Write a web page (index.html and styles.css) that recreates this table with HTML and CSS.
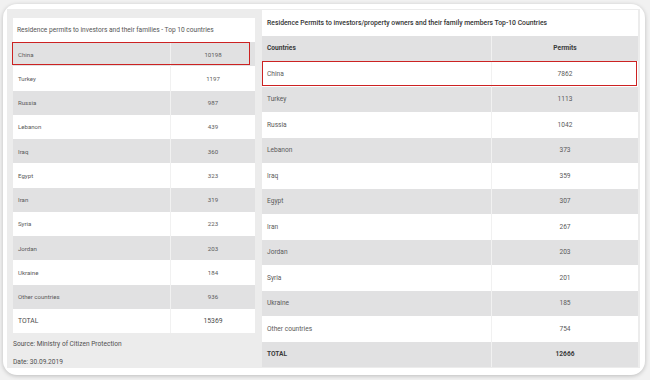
FILE: index.html
```html
<!DOCTYPE html>
<html>
<head>
<meta charset="utf-8">
<link rel="stylesheet" href="styles.css">
</head>
<body>
<div class="card">
  <div class="inner">
    <div class="left">
      <div class="ltable">
        <div class="ltitle">Residence permits to investors and their families - Top 10 countries</div>
        <div class="row gray hl"><div class="c1">China</div><div class="c2">10198</div></div>
        <div class="row"><div class="c1">Turkey</div><div class="c2">1197</div></div>
        <div class="row gray"><div class="c1">Russia</div><div class="c2">987</div></div>
        <div class="row"><div class="c1">Lebanon</div><div class="c2">439</div></div>
        <div class="row gray"><div class="c1">Iraq</div><div class="c2">360</div></div>
        <div class="row"><div class="c1">Egypt</div><div class="c2">323</div></div>
        <div class="row gray"><div class="c1">Iran</div><div class="c2">319</div></div>
        <div class="row"><div class="c1">Syria</div><div class="c2">223</div></div>
        <div class="row gray"><div class="c1">Jordan</div><div class="c2">203</div></div>
        <div class="row"><div class="c1">Ukraine</div><div class="c2">184</div></div>
        <div class="row gray"><div class="c1">Other countries</div><div class="c2">936</div></div>
        <div class="row ltotal"><div class="c1">TOTAL</div><div class="c2">15369</div></div>
      </div>
      <p class="source">Source: Ministry of Citizen Protection</p>
      <p class="date">Date: 30.09.2019</p>
    </div>
    <div class="rtable">
      <div class="rtitle">Residence Permits to investors/property owners and their family members Top-10 Countries</div>
      <div class="rrow gray head"><div class="c1">Countries</div><div class="c2">Permits</div></div>
      <div class="rrow hl"><div class="c1">China</div><div class="c2">7862</div></div>
      <div class="rrow gray"><div class="c1">Turkey</div><div class="c2">1113</div></div>
      <div class="rrow"><div class="c1">Russia</div><div class="c2">1042</div></div>
      <div class="rrow gray"><div class="c1">Lebanon</div><div class="c2">373</div></div>
      <div class="rrow"><div class="c1">Iraq</div><div class="c2">359</div></div>
      <div class="rrow gray"><div class="c1">Egypt</div><div class="c2">307</div></div>
      <div class="rrow"><div class="c1">Iran</div><div class="c2">267</div></div>
      <div class="rrow gray"><div class="c1">Jordan</div><div class="c2">203</div></div>
      <div class="rrow"><div class="c1">Syria</div><div class="c2">201</div></div>
      <div class="rrow gray"><div class="c1">Ukraine</div><div class="c2">185</div></div>
      <div class="rrow"><div class="c1">Other countries</div><div class="c2">754</div></div>
      <div class="rrow gray head"><div class="c1">TOTAL</div><div class="c2">12666</div></div>
    </div>
  </div>
</div>
</body>
</html>
```

FILE: styles.css
```css
html, body {
  margin: 0;
  padding: 0;
}
body {
  width: 650px;
  height: 380px;
  background: #f1f1f1;
  font-family: Roboto, "Liberation Sans", sans-serif;
  color: #5a5a5a;
  overflow: hidden;
}
.card {
  margin: 4px 5px 0 3px;
  height: 371px;
  box-sizing: border-box;
  background: #fff;
  border-radius: 14px;
  box-shadow: 0 1px 4px rgba(0, 0, 0, 0.22);
  padding: 5px 5px 7px 4px;
}
.inner {
  height: 100%;
  background: #ececec;
  display: flex;
  align-items: flex-start;
  gap: 7px;
  padding: 0 2px 0 6px;
  box-sizing: border-box;
}
.left {
  width: 242px;
  padding-top: 9px;
}
.ltable {
  display: flex;
  flex-direction: column;
}
.ltitle {
  height: 24px;
  background: #fff;
  display: flex;
  align-items: center;
  padding-left: 4px;
  font-size: 6.6px;
  color: #555;
}
.row {
  height: 24.25px;
  display: grid;
  grid-template-columns: 157px 85px;
  background: #fff;
  font-size: 6.1px;
  position: relative;
}
.row.gray, .rrow.gray {
  background: #e1e1e2;
}
.c1 {
  display: flex;
  align-items: center;
  padding-left: 5px;
}
.c2 {
  display: flex;
  align-items: center;
  justify-content: center;
  border-left: 1px solid #f1f1f1;
}
.row.ltotal {
  font-size: 6.8px;
  color: #4a4a4a;
}
.hl::after {
  content: "";
  position: absolute;
  border: 1.5px solid #cc2222;
}
.row.hl::after {
  left: -1px;
  top: 0;
  right: 5px;
  bottom: 1px;
}
.source {
  margin: 0;
  height: 15px;
  display: flex;
  align-items: flex-end;
  font-size: 6.6px;
  color: #505050;
}
.date {
  margin: 0;
  height: 22px;
  display: flex;
  align-items: center;
  font-size: 6.6px;
  color: #505050;
  padding-top: 6px;
  box-sizing: border-box;
}
.rtable {
  width: 376px;
  margin-top: 1px;
  display: flex;
  flex-direction: column;
}
.rtitle {
  height: 25.5px;
  background: #fff;
  display: flex;
  align-items: center;
  padding-left: 5px;
  font-size: 6.8px;
  font-weight: 500;
  color: #333;
}
.rrow {
  height: 25.5px;
  display: grid;
  grid-template-columns: 229px 147px;
  background: #fff;
  font-size: 6.6px;
  position: relative;
}
.rrow .c1 {
  padding-left: 5px;
}
.rrow.head {
  font-weight: 700;
  color: #3a3a3a;
}
.rrow.hl::after {
  left: 0;
  top: 0;
  right: 1px;
  bottom: 1px;
}
```
